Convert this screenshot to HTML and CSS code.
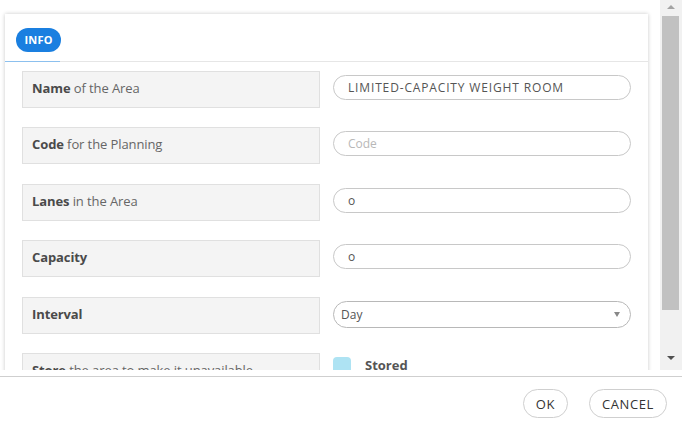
FILE: index.html
```
<!DOCTYPE html>
<html>
<head>
<meta charset="utf-8">
<link rel="stylesheet" href="styles.css">
</head>
<body>
<div class="dialog">
  <div class="scroll-area">
    <div class="content">
      <div class="card">
        <div class="tabs">
          <span class="tab">INFO</span>
        </div>
        <div class="tab-line"><span class="tab-line-active"></span></div>
        <div class="form">
          <div class="row">
            <div class="label"><b>Name</b> of the Area</div>
            <div class="input caps">LIMITED-CAPACITY WEIGHT ROOM</div>
          </div>
          <div class="row">
            <div class="label"><b>Code</b> for the Planning</div>
            <div class="input placeholder">Code</div>
          </div>
          <div class="row">
            <div class="label"><b>Lanes</b> in the Area</div>
            <div class="input">o</div>
          </div>
          <div class="row">
            <div class="label"><b>Capacity</b></div>
            <div class="input">o</div>
          </div>
          <div class="row">
            <div class="label"><b>Interval</b></div>
            <div class="select"><span>Day</span><span class="caret"></span></div>
          </div>
          <div class="row">
            <div class="label"><b>Store</b> the area to make it unavailable</div>
            <div class="check-wrap"><span class="checkbox"></span><span class="check-label">Stored</span></div>
          </div>
        </div>
      </div>
    </div>
    <div class="scrollbar">
      <span class="arrow-up"></span>
      <span class="thumb"></span>
      <span class="track-rest"></span>
      <span class="arrow-down"></span>
    </div>
  </div>
  <div class="footer">
    <button class="btn">OK</button>
    <button class="btn">CANCEL</button>
  </div>
</div>
</body>
</html>
```
FILE: styles.css
```
* { box-sizing: border-box; }
html, body { margin: 0; padding: 0; background: #fff; }
body { font-family: "Open Sans", "Lato", sans-serif; color: #555; width: 682px; height: 434px; overflow: hidden; }
.dialog { display: flex; flex-direction: column; height: 434px; }
.scroll-area { display: flex; height: 370px; overflow: hidden; }
.content { flex: 1; padding: 14px 12px 0 5px; overflow: hidden; }
.card { width: 643px; background: #fff; box-shadow: 0 0 4px rgba(0,0,0,0.22); height: 400px; }
.tabs { height: 47px; padding: 13px 0 0 11px; }
.tab { display: inline-block; background: #1a7fe0; color: #fff; font-weight: 700; font-size: 11px; height: 24px; line-height: 23px; width: 45px; text-align: center; border-radius: 12px; letter-spacing: 0.2px; }
.tab-line { height: 1px; background: #e6e6e6; }
.tab-line-active { display: block; width: 55px; height: 1px; background: #8cc0ee; }
.form { padding: 9px 17px 0 17px; display: flex; flex-direction: column; gap: 19.4px; }
.row { display: flex; gap: 13px; align-items: flex-start; }
.label { width: 298px; height: 37px; background: #f4f4f4; border: 1px solid #e0e0e0; font-size: 13px; color: #666; padding: 0 9px; line-height: 32px; white-space: nowrap; overflow: hidden; letter-spacing: -0.1px; }
.label b { color: #4a4a4a; font-weight: 700; }
.input { width: 298px; height: 25px; margin-top: 4px; border: 1px solid #c8c8c8; border-radius: 13px; font-size: 12px; line-height: 23px; padding: 0 14px; color: #555; white-space: nowrap; }
.input.caps { letter-spacing: 0.85px; }
.input.placeholder { color: #b8b8b8; }
.select { width: 298px; height: 27px; margin-top: 4px; border: 1px solid #b8b8b8; border-radius: 14px; font-size: 12px; line-height: 25px; padding: 0 7px; color: #555; display: flex; justify-content: space-between; align-items: center; }
.caret { width: 0; height: 0; border-left: 3.5px solid transparent; border-right: 3.5px solid transparent; border-top: 5px solid #888; margin-right: 3px; }
.check-wrap { display: flex; align-items: flex-start; margin-top: 4px; }
.checkbox { width: 18px; height: 18px; background: #aee3f3; border-radius: 4px; }
.check-label { font-weight: 700; font-size: 13px; color: #555; margin-left: 14px; line-height: 16px; }
.scrollbar { width: 22px; flex: none; background: #f1f1f1; display: flex; flex-direction: column; align-items: center; }
.arrow-up { width: 0; height: 0; border-left: 4px solid transparent; border-right: 4px solid transparent; border-bottom: 4px solid #a3a3a3; margin-top: 5px; margin-bottom: 7px; }
.thumb { width: 17px; height: 294px; background: #c1c1c1; margin-left: -1px; }
.track-rest { flex: 1; }
.arrow-down { width: 0; height: 0; border-left: 4px solid transparent; border-right: 4px solid transparent; border-top: 4px solid #505050; margin-bottom: 10px; }
.footer { margin-top: 6px; border-top: 1px solid #cfcfcf; display: flex; justify-content: flex-end; gap: 21px; padding: 12px 15px 0 0; }
.btn { font-family: "Open Sans", "Lato", sans-serif; background: #fff; border: 1px solid #cfcfcf; border-radius: 15px; height: 29px; font-size: 13px; color: #333; padding: 0 12px; letter-spacing: 0.6px; cursor: pointer; }
```
